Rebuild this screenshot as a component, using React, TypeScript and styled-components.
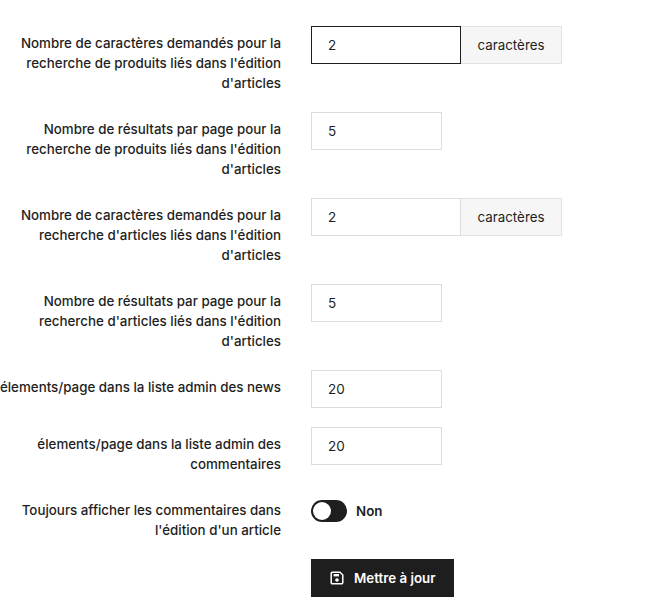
import styled, { createGlobalStyle } from "styled-components";

const GlobalStyle = createGlobalStyle`
  html, body {
    margin: 0;
    padding: 0;
    background: #fff;
    overflow: hidden;
  }
  body {
    font-family: "Inter", "Liberation Sans", sans-serif;
    font-size: 13.35px;
    color: #1e1e1e;
  }
`;

const Form = styled.form`
  width: 659px;
  height: 615px;
  padding-top: 26px;
  box-sizing: border-box;
  overflow: hidden;
`;

const Row = styled.div`
  display: grid;
  grid-template-columns: 291px 1fr;
  column-gap: 30px;
  margin-left: -10px;
  margin-bottom: 19px;
  align-items: start;
`;

const Label = styled.label`
  padding-top: 7px;
  text-align: right;
  font-weight: 500;
  line-height: 20px;
`;

const Field = styled.div`
  display: flex;
  align-items: stretch;
  height: 38px;
`;

const Input = styled.input<{ $wide?: boolean; $focused?: boolean }>`
  box-sizing: border-box;
  width: ${(p) => (p.$wide ? "150px" : "131px")};
  height: 38px;
  padding: 0 16px;
  border: 1px solid ${(p) => (p.$focused ? "#1e1e1e" : "#dcdcdc")};
  outline: none;
  background: #fff;
  color: #1e1e1e;
  font: inherit;
  font-size: 13.5px;
`;

const Addon = styled.span`
  box-sizing: border-box;
  width: 101px;
  display: flex;
  align-items: center;
  justify-content: center;
  border: 1px solid #e2e2e2;
  border-left: none;
  background: #f6f6f6;
`;

const SwitchRow = styled.div`
  display: flex;
  align-items: center;
  gap: 9px;
  margin-top: 7px;
  height: 22px;
`;

const Track = styled.span`
  position: relative;
  display: block;
  width: 36px;
  height: 22px;
  border-radius: 11px;
  background: #1e1e1e;
`;

const Knob = styled.span`
  position: absolute;
  left: 2px;
  top: 2px;
  width: 18px;
  height: 18px;
  border-radius: 50%;
  background: #fff;
`;

const SwitchText = styled.span`
  font-weight: 600;
`;

const Actions = styled.div`
  padding-left: 311px;
`;

const Submit = styled.button`
  display: inline-flex;
  align-items: center;
  gap: 10px;
  box-sizing: border-box;
  width: 143px;
  height: 38px;
  padding: 0 0 0 19px;
  border: none;
  background: #1e1e1e;
  color: #fff;
  font: inherit;
  font-weight: 600;
  white-space: nowrap;
`;

const SaveIcon = () => (
  <svg width="14" height="14" viewBox="0 0 14 14" fill="none">
    <path
      d="M2.4 1.2h7.6l2.8 2.8v7.6a1.2 1.2 0 0 1-1.2 1.2H2.4a1.2 1.2 0 0 1-1.2-1.2V2.4a1.2 1.2 0 0 1 1.2-1.2z"
      stroke="#fff"
      strokeWidth="1.5"
    />
    <rect x="3.6" y="3" width="5.4" height="2.4" fill="#fff" />
    <circle cx="7" cy="9" r="1.8" fill="#fff" />
  </svg>
);

const fields = [
  { label: "Nombre de caractères demandés pour la recherche de produits liés dans l'édition d'articles", value: "2", addon: true, focused: true },
  { label: "Nombre de résultats par page pour la recherche de produits liés dans l'édition d'articles", value: "5" },
  { label: "Nombre de caractères demandés pour la recherche d'articles liés dans l'édition d'articles", value: "2", addon: true },
  { label: "Nombre de résultats par page pour la recherche d'articles liés dans l'édition d'articles", value: "5" },
  { label: "élements/page dans la liste admin des news", value: "20" },
  { label: "élements/page dans la liste admin des commentaires", value: "20" },
];

export default function App() {
  return (
    <>
      <GlobalStyle />
      <Form>
        {fields.map((f) => (
          <Row key={f.label}>
            <Label>{f.label}</Label>
            <Field>
              <Input defaultValue={f.value} $wide={f.addon} $focused={f.focused} />
              {f.addon && <Addon>caractères</Addon>}
            </Field>
          </Row>
        ))}
        <Row>
          <Label>Toujours afficher les commentaires dans l'édition d'un article</Label>
          <SwitchRow>
            <Track>
              <Knob />
            </Track>
            <SwitchText>Non</SwitchText>
          </SwitchRow>
        </Row>
        <Actions>
          <Submit type="button">
            <SaveIcon />
            Mettre à jour
          </Submit>
        </Actions>
      </Form>
    </>
  );
}
